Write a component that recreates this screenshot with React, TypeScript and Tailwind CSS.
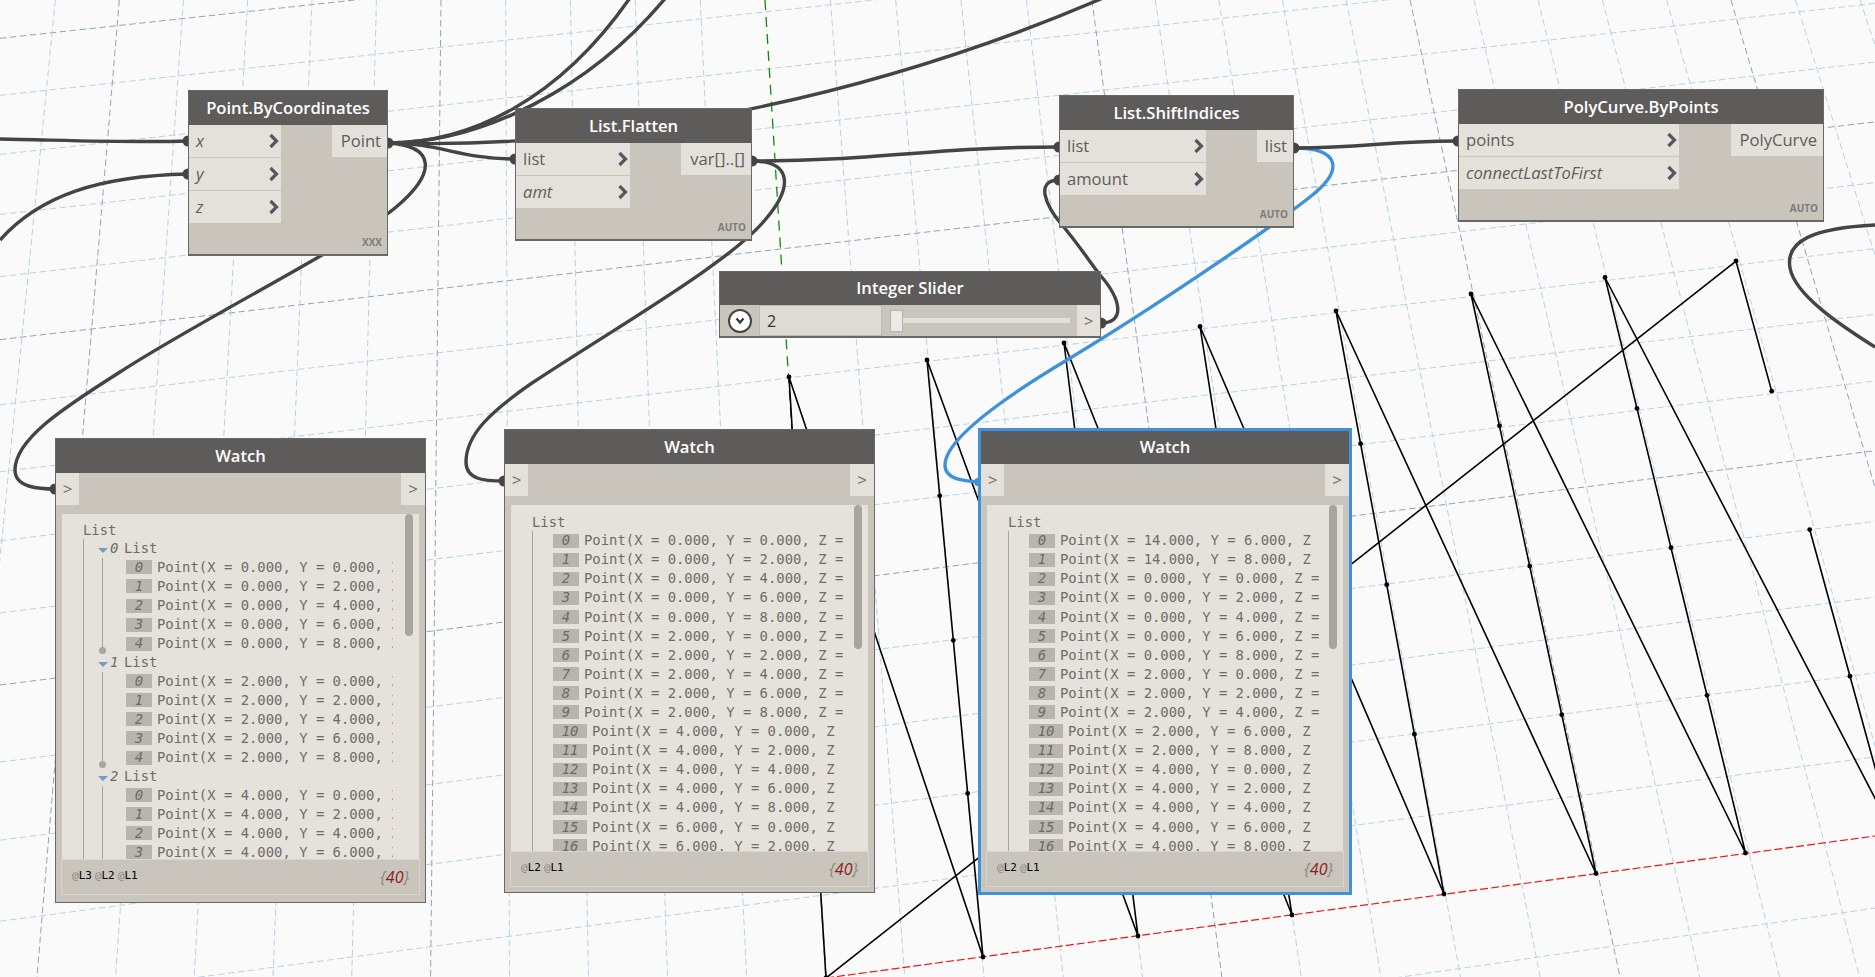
import React from 'react';

const tops = [[789, 377], [927, 360], [1064, 343], [1200, 326.5], [1336, 311], [1471, 294], [1605, 277.5], [1736, 261]];
const bots = [[826, 978], [983, 957], [1138, 936], [1292, 915], [1444, 894], [1596, 873.5], [1745.5, 853], [1893, 833]];
const fracs = [1, 0.726, 0.4695, 0.2275, 0];

const geoPt = (col: number, row: number) => {
  const f = fracs[row];
  return [tops[col][0] + (bots[col][0] - tops[col][0]) * f, tops[col][1] + (bots[col][1] - tops[col][1]) * f];
};

const curve: number[][] = [geoPt(7, 3), geoPt(7, 4)];
for (let c = 0; c < 7; c++) for (let r = 0; r < 5; r++) curve.push(geoPt(c, r));
curve.push(geoPt(7, 0), geoPt(7, 1), geoPt(7, 2));

// grid lines running left to right: y at x=40, y at x=1745
const hLines = [
  [34, -150, 1], [91, -95, 0], [150, -40, 0], [210, 18, 0], [272, 77, 0], [335, 137, 1], [400, 198, 0], [467, 264, 0],
  [536, 330, 0], [608, 397, 0], [680, 467, 1], [757, 538, 0], [835, 614, 0], [916, 690, 0], [998, 774, 0],
  [1175, 927, 0], [1262, 1005, 0],
];

const vLines: { x1: number; y1: number; x2: number; y2: number; major: boolean }[] = [];
for (let i = -17; i <= 15; i++) {
  if (i === -5) continue;
  const xr = 1215 + 77.2 * i - 0.13 * i * i;
  const k = xr < 1215 ? 0.133 + 0.000183 * (xr - 1215) : 0.133 + 0.000214 * (xr - 1215);
  const yr = 957 - 0.1357 * (xr - 983);
  vLines.push({ x1: xr - k * yr, y1: 0, x2: xr + k * (977 - yr), y2: 977, major: i % 5 === 0 });
}

const grayWires = [
  'M0 139 C 60 140 130 143 188 141',
  'M0 240 C 40 195 100 176 188 174',
  'M388 143 C 440 143 460 159 515 159',
  'M388 143 C 620 150 880 95 1110 -5',
  'M388 143 C 470 143 560 100 632 -5',
  'M388 143 C 480 143 590 90 668 -5',
  'M388 143 C 435 146 438 172 395 208 C 350 245 200 320 120 372 C 60 410 15 440 15 470 C 15 488 40 489 56 489',
  'M752 161 C 880 161 930 147 1059 147',
  'M752 161 C 790 161 795 185 765 220 C 730 262 620 325 532 383 C 490 412 466 435 466 462 C 466 480 485 481 504 481',
  'M1101 323 C 1125 323 1122 300 1100 275 C 1085 255 1075 240 1062 225 C 1045 205 1035 180 1059 180',
  'M1294 148 C 1370 148 1380 141 1458 141',
  'M1875 225 C 1815 228 1785 240 1790 268 C 1795 295 1840 325 1875 347',
];

const portDots = [
  [188, 141], [188, 174], [388, 143], [515, 159], [752, 161], [1059, 147], [1059, 180], [1294, 148], [1458, 141],
  [1101, 323], [55, 489], [504, 481],
];

function Canvas() {
  return (
    <svg className="absolute inset-0" width={1875} height={977} fill="none">
      {hLines.map(([a, b, major], i) => {
        const s = (b - a) / 1705;
        return (
          <line
            key={i}
            x1={0}
            y1={a - 40 * s}
            x2={1875}
            y2={b + 130 * s}
            stroke={major ? '#8ea5b9' : '#b5d3e6'}
            strokeWidth={1}
            strokeDasharray="6.5 3.5"
          />
        );
      })}
      {vLines.map((l, i) => (
        <line
          key={i}
          x1={l.x1}
          y1={l.y1}
          x2={l.x2}
          y2={l.y2}
          stroke={l.major ? '#8ea5b9' : '#b5d3e6'}
          strokeWidth={1}
          strokeDasharray="6.5 3.5"
        />
      ))}
      <line x1={765} y1={0} x2={826} y2={978} stroke="#0f8a0f" strokeWidth={1.3} strokeDasharray="10 7" />
      <line x1={826} y1={978} x2={1875} y2={836} stroke="#f01414" strokeWidth={1.2} strokeDasharray="8 3" />
      <polyline points={curve.map((p) => p.join(',')).join(' ')} stroke="#000" strokeWidth={1.6} />
      {curve.map((p, i) => (
        <circle key={i} cx={p[0]} cy={p[1]} r={2.4} fill="#000" />
      ))}
      <path
        d="M1294 148 C 1340 148 1345 170 1310 197 C 1265 232 1150 310 1067 360 C 1000 400 945 440 945 465 C 945 480 965 481 980 482"
        stroke="#3f92da"
        strokeWidth={3.4}
      />
      <circle cx={978} cy={482} r={4} fill="#3f92da" />
      {grayWires.map((d, i) => (
        <path key={i} d={d} stroke="#444444" strokeWidth={3.4} />
      ))}
      {portDots.map(([x, y], i) => (
        <circle key={i} cx={x} cy={y} r={5.5} fill="#444444" />
      ))}
    </svg>
  );
}

function Chevron() {
  return (
    <svg width="11" height="16" viewBox="0 0 11 16" fill="none" className="shrink-0">
      <path d="M2.5 2 L8.5 8 L2.5 14" stroke="#555860" strokeWidth="3.2" />
    </svg>
  );
}

function InPort({ label, italic }: { label: string; italic?: boolean }) {
  return (
    <div className={`flex h-8 items-center justify-between bg-[#e4e1db] pl-[7px] pr-[2px] text-[#5d5d5e] ${italic ? 'italic' : ''}`}>
      <span>{label}</span>
      <Chevron />
    </div>
  );
}

function Node({
  title,
  className,
  portsClass,
  outClass,
  inputs,
  output,
  tag,
}: {
  title: string;
  className: string;
  portsClass: string;
  outClass: string;
  inputs: { label: string; italic?: boolean }[];
  output: string;
  tag: string;
}) {
  return (
    <div className={`absolute flex flex-col border border-b-2 border-[#6a6864] bg-[#c9c5bd] font-['Open_Sans',sans-serif] text-[16.6px] ${className}`}>
      <div className="flex h-[34px] shrink-0 items-center justify-center bg-[#5e5c5a] font-semibold text-white">{title}</div>
      <div className="flex flex-1 justify-between">
        <div className={`flex flex-col gap-px ${portsClass}`}>
          {inputs.map((p) => (
            <InPort key={p.label} label={p.label} italic={p.italic} />
          ))}
        </div>
        <div className={`flex h-8 items-center justify-end bg-[#e4e1db] pr-[6px] text-[#5d5d5e] ${outClass}`}>{output}</div>
      </div>
      <div className="absolute bottom-[7px] right-[5px] text-[10px] font-bold leading-none text-[#7e7b76]">{tag}</div>
    </div>
  );
}

function Row({ index, text }: { index: number; text: string }) {
  return (
    <div className="flex h-[19.1px] items-center whitespace-nowrap">
      <span
        className={`mr-[5px] flex h-[14px] shrink-0 items-center justify-center bg-[#b8b5ae] italic text-[#6d6a66] ${index > 9 ? 'w-[34px]' : 'w-[26px]'}`}
      >
        {index}
      </span>
      <span>{text}</span>
    </div>
  );
}

const pointText = (x: number, y: number) =>
  `Point(X = ${x.toFixed(3)}, Y = ${y.toFixed(3)}, Z = 0.000)`;

const flat: string[] = [];
for (let x = 0; x <= 14; x += 2) for (let y = 0; y <= 8; y += 2) flat.push(pointText(x, y));
const shifted = [pointText(14, 6), pointText(14, 8), ...flat];

function ScrollThumb({ className }: { className: string }) {
  return <div className={`absolute right-[6px] top-0 w-[8px] rounded-full bg-[#a8a59e] ${className}`} />;
}

function FlatList({ rows }: { rows: string[] }) {
  return (
    <div className="h-full w-[332px] overflow-hidden pl-[21px] pt-2">
      <div className="h-[18px] leading-[18px]">List</div>
      <div className="border-l border-[#a8a59e] pl-[20px]">
        {rows.slice(0, 17).map((t, i) => (
          <Row key={i} index={i} text={t} />
        ))}
      </div>
    </div>
  );
}

function NestedList() {
  return (
    <div className="h-full w-[331px] overflow-hidden pl-[21px] pt-[7px]">
      <div className="h-[18.4px] leading-[18px]">List</div>
      <div className="h-[400px] border-l border-[#a8a59e]">
        {[0, 1, 2].map((n) => (
          <div key={n}>
            <div className="flex h-[18.4px] items-center pl-[14px]">
              <span className="mr-[2px] h-0 w-0 translate-y-[2px] border-x-[5px] border-t-[5px] border-x-transparent border-t-[#6e9cc4]" />
              <span className="w-[14px] italic text-[#6d6a66]">{n}</span>
              <span>List</span>
            </div>
            <div className="relative ml-[18px] border-l border-[#a8a59e] pl-[23px]">
              {[0, 1, 2, 3, 4].map((y) => (
                <Row key={y} index={y} text={pointText(n * 2, y * 2)} />
              ))}
              <span className="absolute bottom-[-1px] left-[-4px] h-[7px] w-[7px] rounded-full bg-[#a8a59e]" />
            </div>
          </div>
        ))}
      </div>
    </div>
  );
}

function LevelTags({ levels }: { levels: string[] }) {
  return (
    <div className="flex gap-[3px] font-['DejaVu_Sans_Mono',monospace] text-[11px] text-black">
      {levels.map((l) => (
        <span key={l}>
          <span className="text-[#8a8781]">@</span>
          {l}
        </span>
      ))}
    </div>
  );
}

function Watch({
  className,
  titleClass,
  list,
  levels,
  thumb,
  footerMargin,
}: {
  className: string;
  titleClass: string;
  list: React.ReactNode;
  levels: string[];
  thumb: string;
  footerMargin: string;
}) {
  return (
    <div className={`absolute flex flex-col bg-[#c9c5bd] font-['Open_Sans',sans-serif] text-[16.6px] ${className}`}>
      <div className={`flex shrink-0 items-center justify-center bg-[#5e5c5a] font-semibold text-white ${titleClass}`}>Watch</div>
      <div className="flex h-8 shrink-0 justify-between text-[17px] text-[#6e6c68]">
        <span className="flex w-[23px] items-center justify-center bg-[#e4e1db]">&gt;</span>
        <span className="flex w-[24px] items-center justify-center bg-[#e4e1db]">&gt;</span>
      </div>
      <div className="relative mx-[6px] mt-[9px] min-h-0 flex-1 bg-[#e5e2dc] font-['DejaVu_Sans_Mono',monospace] text-[13.9px] text-[#6f6c68]">
        {list}
        <ScrollThumb className={thumb} />
      </div>
      <div className={`flex h-[36px] shrink-0 items-center justify-between border border-[#d8d5cf] pb-px pl-[10px] pr-[10px] ${footerMargin}`}>
        <LevelTags levels={levels} />
        <span className="text-base italic text-[#8b8882]">
          {'{'}
          <span className="text-[#8e1b1b]">40</span>
          {'}'}
        </span>
      </div>
    </div>
  );
}

function IntegerSlider() {
  return (
    <div className="absolute left-[719px] top-[271px] flex h-[67px] w-[382px] flex-col border border-b-2 border-[#6a6864] bg-[#c9c5bd] font-['Open_Sans',sans-serif] text-[16.6px]">
      <div className="flex h-[33px] shrink-0 items-center justify-center bg-[#5e5c5a] font-semibold text-white">Integer Slider</div>
      <div className="flex flex-1">
        <div className="flex w-[39px] items-center justify-center">
          <div className="flex h-[24px] w-[24px] items-center justify-center rounded-full border-2 border-[#444] bg-white">
            <svg width="10" height="8" viewBox="0 0 10 8" fill="none">
              <path d="M1.5 1.5 L5 5.5 L8.5 1.5" stroke="#333" strokeWidth="2.2" />
            </svg>
          </div>
        </div>
        <div className="flex w-[123px] items-center border border-[#bdbab3] bg-[#dedbd5] pl-[7px] text-base text-[#333]">2</div>
        <div className="flex flex-1 items-center pl-[8px] pr-[7px]">
          <div className="h-[22px] w-[13px] shrink-0 border border-[#b5b2ab] bg-[#eceae6]" />
          <div className="h-[5px] flex-1 bg-[#e2e0da]" />
        </div>
        <div className="flex w-[23px] items-center justify-center bg-[#e4e1db] text-[17px] text-[#6e6c68]">&gt;</div>
      </div>
    </div>
  );
}

export default function App() {
  return (
    <div className="relative h-[977px] w-[1875px] overflow-hidden bg-[#fafafa]">
      <Canvas />
      <Node
        title="Point.ByCoordinates"
        className="left-[188px] top-[90px] h-[166px] w-[200px]"
        portsClass="w-[92px]"
        outClass="w-[55px]"
        inputs={[
          { label: 'x', italic: true },
          { label: 'y', italic: true },
          { label: 'z', italic: true },
        ]}
        output="Point"
        tag="XXX"
      />
      <Node
        title="List.Flatten"
        className="left-[515px] top-[108px] h-[133px] w-[237px]"
        portsClass="w-[114px]"
        outClass="w-[70px]"
        inputs={[{ label: 'list' }, { label: 'amt', italic: true }]}
        output="var[]..[]"
        tag="AUTO"
      />
      <Node
        title="List.ShiftIndices"
        className="left-[1059px] top-[95px] h-[133px] w-[235px]"
        portsClass="w-[146px]"
        outClass="w-[36px]"
        inputs={[{ label: 'list' }, { label: 'amount' }]}
        output="list"
        tag="AUTO"
      />
      <Node
        title="PolyCurve.ByPoints"
        className="left-[1458px] top-[89px] h-[133px] w-[366px]"
        portsClass="w-[220px]"
        outClass="w-[92px]"
        inputs={[{ label: 'points' }, { label: 'connectLastToFirst', italic: true }]}
        output="PolyCurve"
        tag="AUTO"
      />
      <IntegerSlider />
      <Watch
        className="left-[55px] top-[438px] h-[465px] w-[371px] border border-[#6a6864]"
        titleClass="h-[34px]"
        list={<NestedList />}
        levels={['L3', 'L2', 'L1']}
        thumb="h-[122px]"
        footerMargin="mx-[5px] mb-[7px]"
      />
      <Watch
        className="left-[504px] top-[429px] h-[464px] w-[371px] border border-[#6a6864]"
        titleClass="h-[34px]"
        list={<FlatList rows={flat} />}
        levels={['L2', 'L1']}
        thumb="h-[144px]"
        footerMargin="mx-[5px] mb-[5px]"
      />
      <Watch
        className="left-[978px] top-[428px] h-[467px] w-[374px] border-[3px] border-[#3f92da]"
        titleClass="h-[33px]"
        list={<FlatList rows={shifted} />}
        levels={['L2', 'L1']}
        thumb="h-[144px]"
        footerMargin="mx-[5px] mb-[5px]"
      />
    </div>
  );
}
